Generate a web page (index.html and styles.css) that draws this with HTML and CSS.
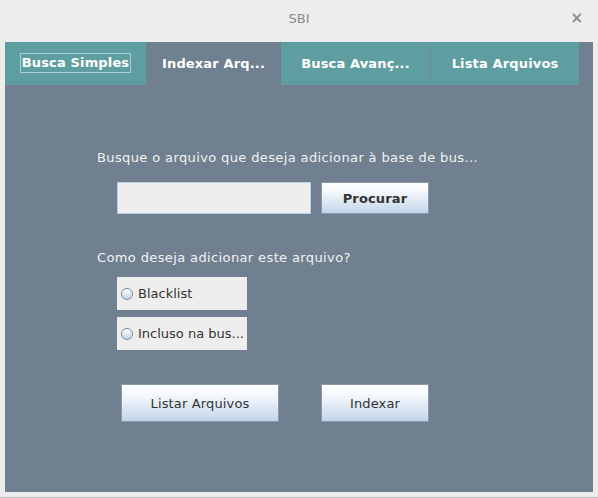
FILE: index.html
```html
<!DOCTYPE html>
<html>
<head>
<meta charset="utf-8">
<link rel="stylesheet" href="styles.css">
</head>
<body>
<div class="window">
  <div class="titlebar">
    <span class="title">SBI</span>
    <span class="close">×</span>
  </div>
  <div class="panel">
    <div class="tabs">
      <div class="tab t1"><span class="focus">Busca Simples</span></div>
      <div class="tab t2 selected">Indexar Arq...</div>
      <div class="tab t3">Busca Avanç...</div>
      <div class="tab t4">Lista Arquivos</div>
    </div>
    <div class="content">
      <div class="label l1">Busque o arquivo que deseja adicionar à base de bus...</div>
      <div class="row r1">
        <div class="field"></div>
        <div class="btn bold procurar">Procurar</div>
      </div>
      <div class="label l2">Como deseja adicionar este arquivo?</div>
      <div class="radio rd1"><span class="dot"></span><span>Blacklist</span></div>
      <div class="radio rd2"><span class="dot"></span><span>Incluso na bus...</span></div>
      <div class="row r2">
        <div class="btn listar">Listar Arquivos</div>
        <div class="btn indexar">Indexar</div>
      </div>
    </div>
  </div>
</div>
</body>
</html>
```
FILE: styles.css
```css
* { box-sizing: border-box; }
html, body { margin: 0; padding: 0; }
body {
  width: 598px;
  height: 498px;
  background: #ededed;
  font-family: "DejaVu Sans", sans-serif;
  overflow: hidden;
}
.window {
  width: 598px;
  height: 498px;
  border-bottom: 1px solid #b9b9b9;
}
.titlebar {
  height: 42px;
  display: flex;
  align-items: center;
  justify-content: center;
  position: relative;
  padding-bottom: 6px;
}
.title {
  color: #8a8a8a;
  font-size: 13px;
}
.close {
  position: absolute;
  right: 15px;
  top: 9px;
  font-size: 15px;
  font-weight: bold;
  color: #8c8c8c;
}
.panel {
  margin: 0 5px;
  width: 588px;
  height: 450px;
  background: #708090;
  display: flex;
  flex-direction: column;
}
.tabs {
  display: flex;
  height: 44px;
}
.tab {
  height: 43px;
  display: flex;
  align-items: center;
  justify-content: center;
  color: #fff;
  font-weight: bold;
  font-size: 13px;
  letter-spacing: 0.15px;
  background: #5f9ea0;
  padding-bottom: 1px;
}
.tab.selected { background: #708090; height: 44px; }
.t1 { width: 141px; }
.t2 { width: 135px; }
.t3 { width: 150px; border-right: 1px solid #6d8d96; }
.t4 { width: 148px; }
.focus {
  border: 1px solid #aacfd0;
  padding: 1px 1px 2px 1px;
}
.content {
  display: flex;
  flex-direction: column;
  padding-left: 92px;
}
.label {
  color: #f2f2f2;
  font-size: 13px;
  line-height: 16px;
  letter-spacing: 0.38px;
}
.l1 { margin-top: 64px; }
.row { display: flex; }
.r1 { margin-top: 16px; margin-left: 20px; gap: 10px; }
.field {
  width: 194px;
  height: 32px;
  background: #eeeeee;
  border: 1px solid #b8cfe5;
}
.btn {
  display: flex;
  align-items: center;
  justify-content: center;
  color: #333;
  font-size: 13px;
  letter-spacing: 0.15px;
  border: 1px solid #8a9aa9;
  background: linear-gradient(#ffffff 0%, #f7fafd 25%, #c3d5ea 100%);
}
.bold { font-weight: bold; }
.procurar { width: 108px; height: 32px; }
.l2 { margin-top: 36px; }
.radio {
  margin-left: 20px;
  width: 130px;
  height: 33px;
  background: #eeeeee;
  display: flex;
  align-items: center;
  font-size: 13px;
  color: #333;
  padding-left: 4px;
  gap: 5px;
}
.rd1 { margin-top: 11px; }
.rd2 { margin-top: 7px; }
.dot {
  width: 12px;
  height: 12px;
  border-radius: 50%;
  border: 1px solid #7a8a99;
  background: linear-gradient(#ffffff, #c3d5ea);
}
.r2 { margin-top: 34px; margin-left: 24px; gap: 42px; }
.listar { width: 158px; height: 38px; }
.indexar { width: 108px; height: 38px; }
```
